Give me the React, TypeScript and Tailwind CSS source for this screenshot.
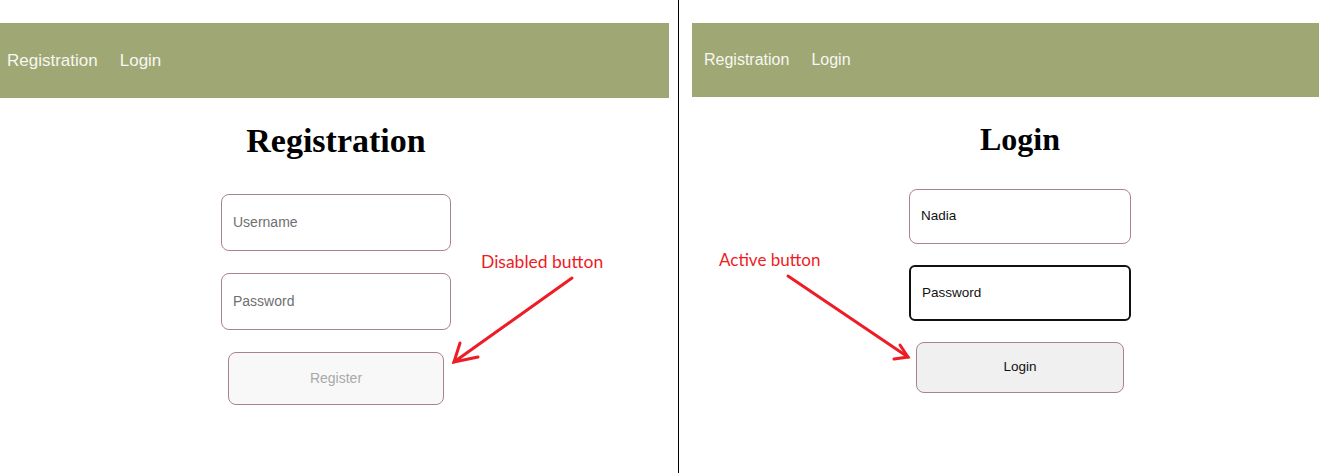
import type { ReactNode } from "react";

const sans = { fontFamily: '"Liberation Sans", Arial, sans-serif' };
const serif = { fontFamily: '"Liberation Serif", "Times New Roman", serif' };
const note = { fontFamily: 'Lato, "Open Sans", sans-serif' };

function NavBar({ size, height, pad }: { size: string; height: string; pad: string }) {
  return (
    <nav className={`flex w-full items-center gap-[22px] bg-[#9fa874] text-[#f7f7f2] ${pad} ${height} ${size}`} style={sans}>
      <a className="cursor-pointer">Registration</a>
      <a className="cursor-pointer">Login</a>
    </nav>
  );
}

function Field({ children, className }: { children: ReactNode; className: string }) {
  return (
    <div className={`flex items-center rounded-lg bg-white px-[11px] ${className}`} style={sans}>
      {children}
    </div>
  );
}

function RegistrationPanel() {
  return (
    <section className="flex w-[669px] shrink-0 flex-col pt-[23px]">
      <NavBar size="text-[17px]" height="h-[75px]" pad="pl-[7px]" />
      <div className="flex flex-col items-center pl-[3px]">
        <h1 className="mt-[26px] text-[34px] font-bold leading-none text-black" style={serif}>
          Registration
        </h1>
        <form className="mt-[36px] flex flex-col items-center gap-[22px]">
          <Field className="h-[57px] w-[230px] border border-[#a88488] text-[14px] text-[#6f6f6f]">Username</Field>
          <Field className="h-[57px] w-[230px] border border-[#a88488] text-[14px] text-[#6f6f6f]">Password</Field>
          <button
            type="button"
            disabled
            className="h-[53px] w-[216px] rounded-lg border border-[#a88488] bg-[#f8f8f8] text-[14px] text-[#a9a9a9]"
            style={sans}
          >
            Register
          </button>
        </form>
      </div>
    </section>
  );
}

function LoginPanel() {
  return (
    <section className="min-w-0 flex-1 overflow-hidden pt-[23px]">
      <NavBar size="text-[16px]" height="h-[74px]" pad="pl-[12px]" />
      <div className="flex w-[656px] flex-col items-center">
        <h1 className="mt-[26px] text-[32px] font-bold leading-none text-black" style={serif}>
          Login
        </h1>
        <form className="mt-[34px] flex flex-col items-center gap-[21px]">
          <Field className="h-[55px] w-[222px] border border-[#a88488] text-[13.5px] text-[#111]">Nadia</Field>
          <Field className="h-[56px] w-[222px] rounded-md border-2 border-[#111] px-[10px] text-[13.5px] text-[#111]">Password</Field>
          <button
            type="button"
            className="h-[51px] w-[208px] rounded-lg border border-[#a88488] bg-[#f0f0f0] text-[13.5px] text-[#111]"
            style={sans}
          >
            Login
          </button>
        </form>
      </div>
    </section>
  );
}

export default function App() {
  return (
    <div className="relative flex h-[473px] w-[1319px] overflow-hidden bg-white">
      <RegistrationPanel />
      <div className="flex shrink-0 pl-[9px] pr-[13px]">
        <div className="h-full w-px bg-black" />
      </div>
      <LoginPanel />

      {/* annotations drawn over the screenshot */}
      <span className="absolute left-[481px] top-[253px] text-[17.5px] leading-none text-[#ee1c24]" style={note}>
        Disabled button
      </span>
      <span className="absolute left-[719px] top-[251px] text-[17px] leading-none text-[#ee1c24]" style={note}>
        Active button
      </span>
      <svg className="pointer-events-none absolute inset-0" width="1319" height="473" viewBox="0 0 1319 473">
        <g stroke="#ee1c24" strokeWidth="3" strokeLinecap="round" fill="none">
          <path d="M572 278 L454 362" />
          <path d="M460 343 L454 362 L478 357" />
          <path d="M788 276 L908 357" />
          <path d="M900 345 L908 357 L894 359" />
        </g>
      </svg>
    </div>
  );
}
